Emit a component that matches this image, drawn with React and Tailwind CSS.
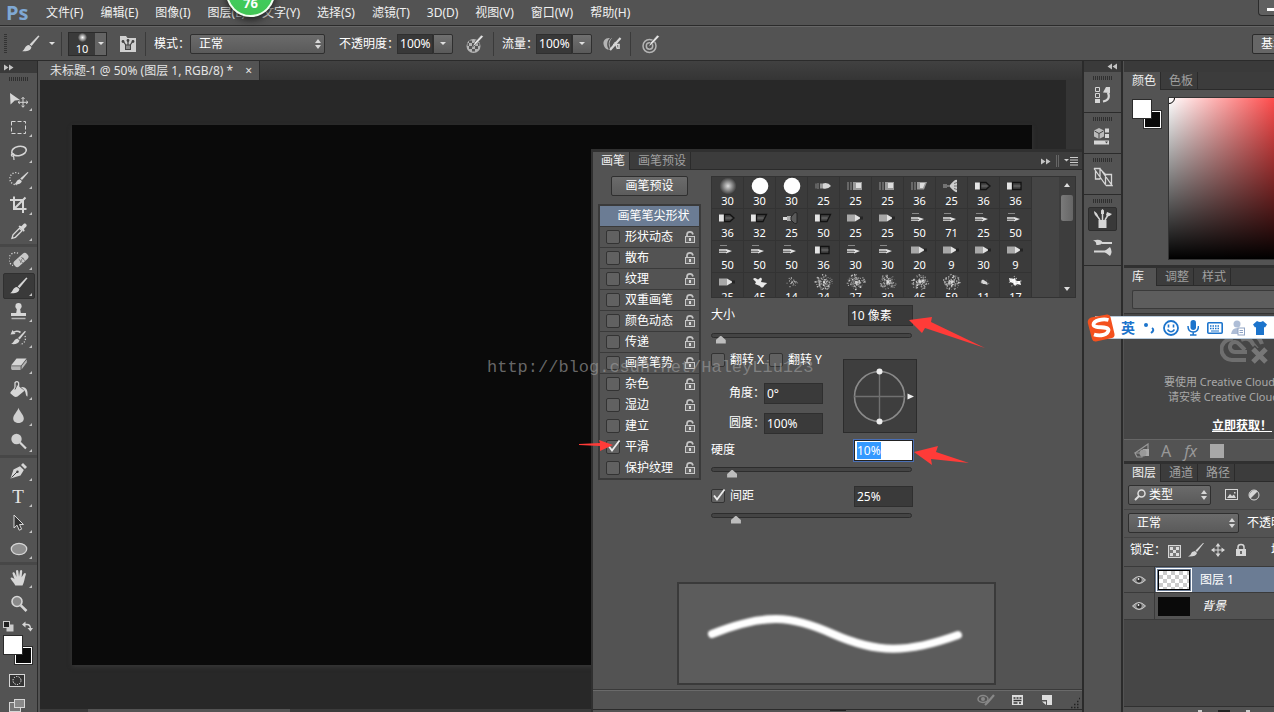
import React, { useEffect, useRef } from "react";

const L = "#d6d6d6";
const M = "#b4b4b4";

function Svg({ w = 20, h = 20, className = "", children }) {
  return (
    <svg width={w} height={h} viewBox={`0 0 ${w} ${h}`} fill="none" aria-hidden="true" className={`block shrink-0 ${className}`}>
      {children}
    </svg>
  );
}

const brushShape = (
  <>
    <path d="M18.5 2.2 10.6 12 8.6 10.4 17.3 1.6Z" fill={L} />
    <path d="M8 11 10.4 13C10 16.5 6 17.8 1.2 17.2 4 16 3.6 11.4 8 11Z" fill={L} />
  </>
);

const tools = {
  move: (
    <>
      <path d="M1 2 11 9 5.8 9.6 1.5 13.5Z" fill={L} />
      <path d="M14 6.5V16M9.2 11.3H18.8M12.5 8 14 6.3 15.5 8M12.5 14.6 14 16.3 15.5 14.6M10.8 9.8 9 11.3 10.8 12.8M17.2 9.8 19 11.3 17.2 12.8" stroke={L} />
    </>
  ),
  marquee: <rect x="2.5" y="4.5" width="14" height="12" stroke={L} strokeDasharray="4 2" />,
  lasso: (
    <>
      <ellipse cx="10" cy="8" rx="7.4" ry="4.6" stroke={L} strokeWidth="1.6" transform="rotate(-12 10 8)" />
      <path d="M3.6 10.5C1.4 11.4 2.4 13.6 4.2 13 6 12.4 5 10.4 3.6 10.5M4.6 13 5 17" stroke={L} strokeWidth="1.2" />
    </>
  ),
  quick: (
    <>
      <path d="M10 4.5A6 6 0 1 0 8 15.5" stroke={L} strokeDasharray="1.2 1.6" strokeWidth="1.3" />
      <path d="M19.5 3.5 13 11 11.2 9.5 18.6 3Z" fill={L} />
      <path d="M10.6 10.2 12.8 12C12 15.5 8.6 15.6 5 15.4 7.6 14.4 7 11 10.6 10.2Z" fill={L} />
    </>
  ),
  crop: <path d="M5 1.5V14H17.5M1 5H14V18M16.5 2.5 5.5 13.5" stroke={L} strokeWidth="2" />,
  dropper: (
    <>
      <path d="M3 17.3 4 13.8 10.5 7.2 13 9.7 6.4 16.3Z" stroke={L} strokeWidth="1.3" />
      <path d="m9.5 5.5 5.2 5.2 1-1-.8-1.8 2.4-2.3c1.4-1.6-1-4.1-2.7-2.7l-2.2 2.3-1.8-.8Z" fill={L} />
    </>
  ),
  heal: (
    <>
      <path d="M9 3.2A6 6 0 1 0 4 15.5" stroke={L} strokeDasharray="1.2 1.6" strokeWidth="1.3" />
      <rect x="3.5" y="6.5" width="17" height="7" rx="3" fill="#c9c9c9" transform="rotate(-42 12 10)" />
      <path d="M9.8 9.4 14 13.2M12.4 7 16 10.8" stroke="#777" />
      <path d="M12 10h1.2M13.5 8.4h1M11 12h1" stroke="#555" />
    </>
  ),
  brush: brushShape,
  stamp: (
    <>
      <circle cx="9.5" cy="4.2" r="3.1" fill={L} />
      <path d="M8 6h3l.8 5H17v3H2v-3h5.2Z" fill={L} />
      <path d="M2.5 16.5H16.5" stroke={M} strokeWidth="1.5" />
    </>
  ),
  history: (
    <>
      <path d="M3 5.5C6 2.5 9.5 3 11.5 4.5" stroke={L} strokeWidth="1.6" />
      <path d="M1.5 6.5 3.5 2 6.5 6Z" fill={L} />
      <path d="M17 3.5 10.6 11.5 9 10 15.8 3Z" fill={L} />
      <path d="M8.4 10.5 10.5 12.5C9.5 16 6 16.5 2 16 4.8 15 4.8 11.2 8.4 10.5Z" fill={L} />
      <path d="M16 8c1.5 4-1 8-5 8.5" stroke={L} strokeDasharray="1.2 1.6" strokeWidth="1.3" />
    </>
  ),
  eraser: (
    <>
      <path d="M7.5 4.5H17.5L12 11.5H2Z" fill={L} />
      <path d="M2 12.3H11.6V16H3Q1.8 15.5 2 12.3ZM12.6 12 17.8 5.5V8.5L12.6 15.5Z" fill={M} />
    </>
  ),
  bucket: (
    <>
      <path d="M8 5 15.5 10.8 8.5 16.5Q6.5 17.5 4.5 16L1.5 13.5Q1 12.5 2 11.5Z" fill={L} />
      <path d="M6 8V2.8Q8 .5 9.6 2.8V9" stroke={L} strokeWidth="1.3" />
      <path d="M8 5 6 9.5" stroke="#555" />
      <path d="M12 7C18 6.5 19 11 18.5 16.5 16.5 16.5 17 12 15.5 10.5Z" fill={L} />
    </>
  ),
  blur: <path d="M9.5 1.8C10.5 5.5 14.8 9 14.8 12.5 14.8 18.5 4.2 18.5 4.2 12.5 4.2 9 8.5 5.5 9.5 1.8Z" fill="#cfcfcf" />,
  dodge: (
    <>
      <circle cx="7.5" cy="7" r="5.2" fill="#cfcfcf" />
      <path d="m11 10.5 6 6" stroke={L} strokeWidth="2.2" />
    </>
  ),
  pen: (
    <>
      <path d="M1.5 17.5 4.5 8.5 11 5.2 14.8 9 11.5 14.5Z" fill={L} />
      <path d="M12 4 14 2 18 6 16 8Z" fill={L} />
      <path d="M2.5 16.5 8 11" stroke="#444" />
      <circle cx="8.5" cy="10.7" r="1.2" fill="#444" />
    </>
  ),
  path: <path d="M5 2V15L8 12.2 10.2 17.2 12.6 16.2 10.5 11.5H14.5Z" fill="#333" stroke={L} />,
  ellipse: <ellipse cx="10" cy="10" rx="7.7" ry="5.7" fill="#8f8f8f" stroke={L} strokeWidth="1.3" />,
  hand: (
    <path
      d="M6.3 17.5C5 14.5 2.5 12.5 1.5 10.2 2 8.5 4.5 10 5.5 11.2L3.5 5.5C3.5 4 5.3 4 5.8 5.3L7.5 9 7 3C7.2 1.5 9 1.5 9.3 3L10 8.8 11 3C11.5 1.5 13.3 2 13.2 3.5L12.6 9.3 15 5.5C16 4.3 17.3 5.3 16.8 6.5 15.5 10 15.5 14 13.5 17.5Z"
      fill={L}
    />
  ),
  zoom: (
    <>
      <circle cx="8" cy="7.5" r="5" fill="#8a8a8a" stroke={L} strokeWidth="1.6" />
      <path d="m11.8 11.3 5.7 5.7" stroke={L} strokeWidth="2.6" />
    </>
  ),
};

const toolGroups = [
  [["move", "移动工具"], ["marquee", "矩形选框工具"], ["lasso", "套索工具"], ["quick", "快速选择工具"], ["crop", "裁剪工具"], ["dropper", "吸管工具"]],
  [["heal", "污点修复画笔工具"], ["brush", "画笔工具"], ["stamp", "仿制图章工具"], ["history", "历史记录画笔工具"], ["eraser", "橡皮擦工具"], ["bucket", "油漆桶工具"], ["blur", "模糊工具"], ["dodge", "减淡工具"]],
  [["pen", "钢笔工具"], ["type", "横排文字工具"], ["path", "路径选择工具"], ["ellipse", "椭圆工具"]],
  [["hand", "抓手工具"], ["zoom", "缩放工具"]],
];

function Grip({ className = "" }) {
  return <div className={`h-1 w-5 bg-[repeating-linear-gradient(90deg,#2f2f2f_0_1px,#535353_1px_2px)] ${className}`} />;
}

function Chevrons({ left = false }) {
  return (
    <Svg w={10} h={7} className={left ? "rotate-180" : ""}>
      <path d="M0 .5 4.500 3.500 0 6.500ZM5 .5 9.500 3.500 5 6.500Z" fill="#c4c4c4" />
    </Svg>
  );
}

function Updown() {
  return (
    <Svg w={6} h={10}>
      <path d="M0 4 3 0 6 4ZM0 6 3 10 6 6Z" fill="#d8d8d8" />
    </Svg>
  );
}

function Select({ label, value, className = "", icon = null, pad = "pl-2" }) {
  return (
    <div className={`relative h-5 shrink-0 ${className}`}>
      <select
        aria-label={label}
        defaultValue={value}
        className={`h-5 w-full appearance-none rounded-xs border border-[#2f2f2f] bg-linear-to-b from-[#6b6b6b] to-[#5a5a5a] text-xs leading-4 text-white ${pad}`}
      >
        <option>{value}</option>
      </select>
      {icon && <span className="pointer-events-none absolute top-1 left-1.5">{icon}</span>}
      <span className="pointer-events-none absolute top-[5px] right-1">
        <Updown />
      </span>
    </div>
  );
}

function Combo({ id, label, value }) {
  return (
    <div className="flex shrink-0 items-center">
      <label htmlFor={id} className="-mr-0.5 text-white">{label}</label>
      <input id={id} defaultValue={value} className="h-5 w-9 border border-[#2f2f2f] bg-[#383838] pl-0.5 text-xs text-white" />
      <button aria-label={`${label}滑块`} className="flex h-5 w-5 items-center justify-center rounded-r-xs border border-[#2f2f2f] bg-linear-to-b from-[#707070] to-[#5a5a5a]">
        <Caret />
      </button>
    </div>
  );
}

function Caret() {
  return (
    <Svg w={6} h={3}>
      <path d="M0 0H6L3 3Z" fill="#e0e0e0" />
    </Svg>
  );
}

function Divider() {
  return <div className="h-6 w-px shrink-0 bg-[#3a3a3a]" />;
}

const menus = ["文件(F)", "编辑(E)", "图像(I)", "图层(L)", "文字(Y)", "选择(S)", "滤镜(T)", "3D(D)", "视图(V)", "窗口(W)", "帮助(H)"];

function MenuBar() {
  return (
    <header className="relative flex h-[26px] shrink-0 items-center border-b border-[#2b2b2b] bg-[#535353] pl-1.5">
      <span className="w-10 shrink-0 font-['Open_Sans',sans-serif] text-xl leading-6 font-bold text-[#7fa8d4]">Ps</span>
      <nav className="flex flex-1 gap-[17px] whitespace-nowrap">
        {menus.map((m) => (
          <button key={m} className="leading-4 text-[#f0f0f0]">{m}</button>
        ))}
      </nav>
      <button aria-label="最小化" className="flex h-4 w-4 items-end self-start rounded-bl border-b border-l border-[#2b2b2b] bg-[#606060] pb-1 pl-2">
        <span className="h-[3px] w-2 bg-white" />
      </button>
      <div className="absolute -top-8 left-[226px] z-20 flex h-[49px] w-[49px] items-end justify-center rounded-full border-2 border-[#f1fff1] bg-linear-to-b from-[#3ed76a] to-[#42c554] pb-1 text-[13px] leading-4 font-bold text-white shadow-[0_3px_7px_#222]">
        76
      </div>
    </header>
  );
}

function PressureIcon({ kind }) {
  return (
    <Svg w={20} h={20}>
      {kind === "opacity" && (
        <>
          <circle cx="8.500" cy="12" r="7" fill={M} />
          <path d="M4 6.500h3v2.500H4zM10 6.500h3v2.500h-3zM7 9h3v3H7zM2.500 9H4v3H2.500zM13 9h1.500v3H13zM4 12h3v3H4zM10 12h3v3h-3zM7 15h3v2.500H7z" fill="#565656" />
        </>
      )}
      {kind === "size" && (
        <>
          <circle cx="8.500" cy="12" r="6.500" stroke={M} strokeWidth="1.500" />
          <circle cx="8.500" cy="12" r="3.200" stroke={M} strokeWidth="1.500" />
        </>
      )}
      {kind === "air" ? (
        <>
          <path d="M8 4C3 3.500 1 7 1.500 10S4 16 7 15.500C4 12 5 6.500 8 4Z" fill={M} />
          <path d="M9.500 4.500C6.500 7 6.500 12 9 15" stroke={M} />
          <path d="M8 16 18.500 4" stroke={L} strokeWidth="2.200" />
          <path d="M11 10.500H17V15M13 8 15.500 15" stroke={L} strokeWidth="1.600" />
        </>
      ) : (
        <path d="M18.500 2.500 11.500 10 7.500 13 9.500 8.500 16.300 1Z" fill="#e2e2e2" stroke="#454545" strokeWidth=".6" />
      )}
    </Svg>
  );
}

function OptionsBar() {
  return (
    <div className="flex h-[35px] shrink-0 items-center overflow-hidden border-t border-b border-t-[#666] border-b-[#2b2b2b] bg-[#535353] pl-1 whitespace-nowrap">
      <div className="h-5 w-[3px] shrink-0 bg-[repeating-linear-gradient(#333_0_1px,#535353_1px_2px)]" />
      <button aria-label="工具预设" className="ml-3.5 flex shrink-0 items-center gap-2">
        <Svg>{brushShape}</Svg>
        <Caret />
      </button>
      <div className="ml-1.5"><Divider /></div>
      <button aria-label="画笔选取器" className="ml-1.5 flex h-6 w-[39px] shrink-0 border border-[#2b2b2b] bg-[#3a3a3a]">
        <span className="flex w-[26px] flex-col items-center">
          <span className="h-[9px] w-[9px] rounded-full bg-[radial-gradient(#fff,#999_40%,#3a3a3a_75%)]" />
          <span className="mt-px text-[11px] leading-3 text-white">10</span>
        </span>
        <span className="flex h-full flex-1 items-center justify-center bg-[#646464]"><Caret /></span>
      </button>
      <button aria-label="切换画笔面板" className="ml-3 shrink-0">
        <Svg w={18} h={18}>
          <path d="M1 1H7L8.500 3H17V17H1Z" fill="#d0d0d0" />
          <path d="M4 6 7.500 11M9 5V11M14 6 10.500 11" stroke="#444" strokeWidth="1.300" />
          <circle cx="4" cy="6.500" r="1.400" fill="#444" />
          <circle cx="9" cy="5.500" r="1.400" fill="#444" />
          <circle cx="14" cy="6.500" r="1.400" fill="#444" />
          <rect x="6.500" y="10" width="5" height="4.500" fill="#888" stroke="#444" />
        </Svg>
      </button>
      <div className="ml-2"><Divider /></div>
      <span className="ml-2 text-white">模式：</span>
      <Select label="模式" value="正常" className="w-[135px]" />
      <div className="ml-3.5"><Combo id="opacity" label="不透明度：" value="100%" /></div>
      <button aria-label="不透明度压力" className="ml-3 shrink-0"><PressureIcon kind="opacity" /></button>
      <div className="ml-2"><Divider /></div>
      <div className="ml-2"><Combo id="flow" label="流量：" value="100%" /></div>
      <button aria-label="喷枪" className="ml-2.5 shrink-0"><PressureIcon kind="air" /></button>
      <div className="ml-2"><Divider /></div>
      <button aria-label="大小压力" className="ml-2.5 shrink-0"><PressureIcon kind="size" /></button>
      <div className="ml-auto w-[22px] shrink-0 overflow-hidden">
        <button className="h-5 rounded-xs border border-[#2b2b2b] bg-[#666] px-2 text-white">基本功能</button>
      </div>
    </div>
  );
}

function Swatches() {
  return (
    <div className="relative h-[30px] w-[30px]">
      <div className="absolute right-0 bottom-0 h-[19px] w-[19px] border border-[#2b2b2b] bg-white p-px">
        <div className="h-full w-full bg-[#0a0a0a]" />
      </div>
      <div className="absolute top-0 left-0 h-5 w-5 border border-[#2b2b2b] bg-white" />
    </div>
  );
}

function Toolbar() {
  return (
    <aside className="flex w-[38px] shrink-0 flex-col overflow-hidden border-r border-[#2b2b2b] bg-[#535353]">
      <div className="flex h-3 shrink-0 items-center bg-[#3a3a3a] pl-1"><Chevrons /></div>
      <Grip className="mt-1 mb-[7px] ml-[9px] shrink-0" />
      {toolGroups.map((group, i) => (
        <div key={i} className={i ? "border-t-[3px] border-t-[#474747]" : ""}>
          {group.map(([name, label]) => (
            <button
              key={name}
              aria-label={label}
              className={`relative ml-[3px] flex h-[26px] w-8 items-center rounded-xs pl-[5px] ${name === "brush" ? "border border-[#303030] bg-[#3a3a3a]" : "border border-transparent"}`}
            >
              {name === "type" ? (
                <span className="w-[18px] text-center font-['Liberation_Serif',serif] text-[19px] leading-5 text-[#e4e4e4]">T</span>
              ) : (
                <Svg>{tools[name]}</Svg>
              )}
              {name !== "zoom" && (
                <Svg w={3} h={3} className="absolute right-0.5 bottom-0.5"><path d="M3 0V3H0Z" fill="#c4c4c4" /></Svg>
              )}
            </button>
          ))}
        </div>
      ))}
      <div className="flex h-[18px] shrink-0 items-center gap-2 pl-[3px]">
        <Svg w={11} h={11}>
          <rect x="3.500" y="3.500" width="7" height="7" fill="#ccc" />
          <rect x=".5" y=".5" width="6" height="6" fill="#222" stroke="#ccc" />
        </Svg>
        <Svg w={11} h={11}>
          <path d="M2 3.500H5Q8.500 3.500 8.500 8" stroke={L} strokeWidth="1.300" />
          <path d="M3.500 .5V6.500L0 3.500ZM5.500 7H11L8.500 10.500Z" fill={L} />
        </Svg>
      </div>
      <div className="mb-2 ml-[3px]"><Swatches /></div>
      <button aria-label="快速蒙版" className="ml-2 shrink-0">
        <Svg w={18} h={16}>
          <rect x="1.500" y="1.500" width="15" height="12" fill="#333" stroke={L} />
          <circle cx="9" cy="7.500" r="4" stroke="#fff" strokeDasharray="1.200 1.300" />
        </Svg>
      </button>
      <button aria-label="屏幕模式" className="mt-2 ml-2 shrink-0">
        <Svg w={18} h={16}>
          <rect x="1.500" y="5.500" width="11" height="9" fill="#777" stroke={L} />
          <rect x="6.500" y="2.500" width="10" height="8" fill="#888" stroke={L} />
        </Svg>
      </button>
    </aside>
  );
}

function Lock() {
  return (
    <Svg w={12} h={14}>
      <path d="M3 7V4.500Q3 1.800 6 1.800 8.500 1.800 9 4.500" stroke="#c4c4c4" strokeWidth="1.700" />
      <rect x="1.500" y="6.500" width="9" height="6" fill="#666" stroke="#c8c8c8" />
      <path d="M6 8v3" stroke="#e6e6e6" strokeWidth="1.800" />
    </Svg>
  );
}

function Check({ id, label, checked = false, className = "" }) {
  return (
    <span className={`flex items-center ${className}`}>
      <span className="relative h-3.5 w-3.5 shrink-0">
        <input id={id} type="checkbox" defaultChecked={checked} className="peer block h-3.5 w-3.5 appearance-none rounded-xs border border-[#333] bg-[#616161]" />
        <svg width="14" height="14" viewBox="0 0 14 14" fill="none" aria-hidden="true" className="pointer-events-none absolute top-0 left-0 hidden overflow-visible peer-checked:block">
          <path d="M3 6.500 6 10.500 13.500 .5" stroke="#ececec" strokeWidth="1.800" />
        </svg>
      </span>
      <label htmlFor={id} className="pl-[5px] whitespace-nowrap text-white">{label}</label>
    </span>
  );
}

function Slider({ label, value }) {
  return (
    <input
      type="range"
      aria-label={label}
      defaultValue={value}
      className="block h-4 w-[201px] appearance-none bg-transparent [&::-webkit-slider-runnable-track]:h-[5px] [&::-webkit-slider-runnable-track]:rounded-full [&::-webkit-slider-runnable-track]:border [&::-webkit-slider-runnable-track]:border-[#2d2d2d] [&::-webkit-slider-runnable-track]:bg-[#444] [&::-webkit-slider-thumb]:mt-0.5 [&::-webkit-slider-thumb]:h-2 [&::-webkit-slider-thumb]:w-2.5 [&::-webkit-slider-thumb]:appearance-none [&::-webkit-slider-thumb]:bg-[#bdbdbd] [&::-webkit-slider-thumb]:[clip-path:polygon(50%_0,100%_55%,100%_100%,0_100%,0_55%)]"
    />
  );
}

function Spatter({ n, r, seed }) {
  const dots = [];
  let s = seed;
  const rnd = () => {
    s = (s * 16807) % 2147483647;
    return s / 2147483647;
  };
  for (let i = 0; i < n; i++) {
    const a = rnd() * 6.283;
    const d = rnd() * r;
    dots.push([12 + Math.cos(a) * d, 9 + Math.sin(a) * d * 0.85, 0.3 + rnd() * 0.5, 0.3 + rnd() * 0.6]);
  }
  return dots.map(([x, y, q, o], i) => <circle key={i} cx={x} cy={y} r={q} fill="#ddd" opacity={o} />);
}

function Tip({ kind, index }) {
  const art = {
    soft: <circle cx="12" cy="9" r="8.500" fill="url(#softTip)" />,
    hard: <circle cx="12" cy="9" r="8.300" fill="#fff" />,
    point: <><path d="M4 6.500v5M6 6v6" stroke="#777" strokeWidth="1.300" /><path d="M8 6.500h3v5H8z" fill="#999" /><path d="M11 6.500Q16 5 19 9 16 12.500 11 11.500Z" fill="#d5d5d5" /></>,
    flat: <><path d="M4 5v8M7 5v8" stroke="#777" strokeWidth="1.500" /><path d="M9 5h9v8H9z" fill="#999" /><path d="M12 6h5v5h-5z" fill="#ddd" /></>,
    angle: <><path d="M4 5v8M7 5v8" stroke="#777" strokeWidth="1.500" /><path d="M9 5h10l-3 7.500H9z" fill="#999" /><path d="M12 6h5l-2 5h-3z" fill="#ddd" /></>,
    fan: <><path d="M4 7v4M6 7v4M7 9h4" stroke="#888" strokeWidth="1.500" /><path d="M10 8Q15 2 17 3V15Q15 16 10 10Z" fill="#ccc" /><path d="M14 6.500 17 5.500M14 9h3M14 11.500l3 1" stroke="#555" strokeWidth=".8" /></>,
    dpoint: <><path d="M3 5.500h5v7H3z" fill="#e5e5e5" /><path d="M8.500 5.500H14L18 9 14 12.500H8.500Z" fill="#454545" stroke="#121212" strokeWidth="1.300" /><path d="M9.500 9h6" stroke="#707070" /></>,
    dflat: <><path d="M3 5.500h5v7H3z" fill="#e5e5e5" /><path d="M8.500 5.500H17v7H8.500Z" fill="#454545" stroke="#121212" strokeWidth="1.300" /><path d="M9.500 9h7" stroke="#707070" /></>,
    dangle: <><path d="M3 5.500h5v7H3z" fill="#e5e5e5" /><path d="M8.500 5.500H18.500l-3.500 7H8.500Z" fill="#454545" stroke="#121212" strokeWidth="1.300" /><path d="M9.500 9h6" stroke="#707070" /></>,
    dfan: <><path d="M3 8h5v3H3z" fill="#ddd" /><path d="M7 7h4v5H7z" fill="#aaa" /><path d="M11 8Q15 2 17 4V14Q15 16 11 11Z" fill="#5a5a5a" stroke="#222" /></>,
    marker: <><path d="M3 5.500h8v7H3z" fill="#a8a8a8" /><path d="M11 5.500 16 8.500v1L11 12.500Z" fill="#e2e2e2" /><path d="M16 7.500h3v3h-3z" fill="#242424" /></>,
    pencil: <><path d="M4 4.500h7" stroke="#888" /><path d="M3 8h7v4H3z" fill="#bbb" /><path d="M10 8 16 10 10 12.500Z" fill="#e2e2e2" /><path d="M3 10.500h8" stroke="#777" /></>,
    smear: <path d="M5 6C8 3 9 8 11 6s2-1 3 0l-1 3 6 1c-1 2-2 1-3 3s-3 2-4 0l-5-2 1-2Z" fill="#e9e9e9" filter="url(#tipBlur)" />,
    sparse: <Spatter n={34} r={6} seed={77} />,
    spray: <Spatter n={150} r={9} seed={index * 97 + 13} />,
    chunk: <><path d="M9 8 11 6.500 13 8 15 9 15.500 12 13 11 11 11Z" fill="#d5d5d5" /><Spatter n={18} r={5} seed={31} /></>,
    blob: <><path d="M5 5 9 6 11 5 12 8 16 8 17 12 13 11 11 13 9 10 6 9Z" fill="#fff" /><Spatter n={40} r={7} seed={57} /></>,
  };
  return <Svg w={24} h={18}>{art[kind]}</Svg>;
}

const tips = [
  ["soft", 30], ["hard", 30], ["hard", 30], ["point", 25], ["flat", 25], ["flat", 25], ["angle", 36], ["fan", 25], ["dpoint", 36], ["dflat", 36],
  ["dpoint", 36], ["dangle", 32], ["dfan", 25], ["dangle", 50], ["marker", 25], ["marker", 25], ["pencil", 50], ["pencil", 71], ["pencil", 25], ["pencil", 50],
  ["pencil", 50], ["pencil", 50], ["pencil", 50], ["dflat", 36], ["pencil", 30], ["pencil", 30], ["marker", 20], ["marker", 9], ["marker", 30], ["marker", 9],
  ["marker", 25], ["smear", 45], ["sparse", 14], ["spray", 24], ["spray", 27], ["spray", 39], ["spray", 46], ["spray", 59], ["chunk", 11], ["blob", 17],
];

const dynamics = [
  ["形状动态"], ["散布"], ["纹理"], ["双重画笔"], ["颜色动态"], ["传递"], ["画笔笔势"], ["杂色"], ["湿边"], ["建立"], ["平滑", true], ["保护纹理"],
];

function Field({ id, value, className }) {
  return <input id={id} defaultValue={value} className={`h-[21px] border border-[#2f2f2f] bg-[#3a3a3a] pl-0.5 text-xs text-white ${className}`} />;
}

function TabStrip({ tabs, children }) {
  return (
    <div role="tablist" className="flex h-[18px] shrink-0 items-stretch overflow-hidden bg-[#3c3c3c] whitespace-nowrap shadow-[inset_0_-1px_#2b2b2b]">
      {tabs.map((t, i) => (
        <button
          key={t}
          role="tab"
          aria-selected={i === 0}
          className={`min-w-[33px] border-r border-[#2b2b2b] pr-1 pl-2 text-left leading-4 ${i === 0 ? "bg-[#535353] text-[#f0f0f0]" : "text-[#a0a0a0] shadow-[inset_0_-1px_#2b2b2b]"}`}
        >
          {t}
        </button>
      ))}
      {children}
    </div>
  );
}

function BrushPanel() {
  const hardness = useRef(null);
  useEffect(() => {
    hardness.current.focus();
    hardness.current.select();
  }, []);
  return (
    <section className="absolute top-[88px] right-0 bottom-0 z-10 flex w-[491px] flex-col border-t-[3px] border-l-2 border-[#303030] bg-[#535353]">
      <TabStrip tabs={["画笔", "画笔预设"]}>
        <div className="ml-auto flex items-center gap-[5px] pr-1">
          <Chevrons />
          <span className="h-3 w-[3px] border-r border-l border-[#666]" />
          <Svg w={14} h={10}>
            <path d="M0 3H5L2.500 5.500Z" fill="#ccc" />
            <path d="M6 1.500h8M6 4h8M6 6.500h8M6 9h8" stroke="#ccc" />
          </Svg>
        </div>
      </TabStrip>

      <div className="flex min-h-0 flex-1 pt-1.5 pl-[5px]">
        <div className="w-[113px] shrink-0">
          <button className="ml-[13px] block h-5 w-[77px] rounded-xs border border-[#2f2f2f] bg-linear-to-b from-[#6b6b6b] to-[#5c5c5c] leading-4 text-white">画笔预设</button>
          <div className="mt-2 w-[103px] border-2 border-[#3a3a3a]">
            <button className="block h-5 w-full bg-[#6b7c94] pl-2 leading-4 text-white">画笔笔尖形状</button>
            {dynamics.map(([name, on], i) => (
              <div key={name} className={`flex h-[21px] items-center justify-between border-t pr-[3px] pl-1.5 ${i < 8 ? "border-[#3a3a3a]" : "border-transparent"}`}>
                <Check id={`dyn-${i}`} label={name} checked={on} />
                <button aria-label={`锁定${name}`}><Lock /></button>
              </div>
            ))}
          </div>
        </div>

        <div className="min-w-0 flex-1">
          <div className="flex h-[122px] w-[365px] overflow-hidden border border-[#333] bg-[#454545]">
            <div className="grid h-32 w-80 shrink-0 grid-cols-10">
              {tips.map(([kind, n], i) => (
                <button key={i} className="flex h-8 flex-col items-center border-r border-b border-[#333] bg-[#3b3b3b]">
                  <Tip kind={kind} index={i} />
                  <span className="text-[11px] leading-3 text-white">{n}</span>
                </button>
              ))}
            </div>
            <div className="ml-auto flex w-4 flex-col items-center justify-between bg-[#3d3d3d] py-1.5">
              <Svg w={6} h={4}><path d="M0 4 3 0 6 4Z" fill="#ddd" /></Svg>
              <div className="mt-2 mb-auto h-[26px] w-3 rounded-xs bg-linear-to-r from-[#7a7a7a] to-[#666]" />
              <Svg w={6} h={4}><path d="M0 0H6L3 4Z" fill="#ddd" /></Svg>
            </div>
          </div>

          <div className="w-[207px] pt-1.5">
            <div className="flex h-[22px] items-center justify-between pr-[5px] text-white">
              <label htmlFor="size">大小</label>
              <Field id="size" value="10 像素" className="w-[65px]" />
            </div>
            <div className="pt-px"><Slider label="大小" value={2} /></div>
            <div className="flex">
              <div className="pt-[3px]">
                <div className="flex h-7 items-center">
                  <Check id="flipx" label="翻转 X" className="w-[58px]" />
                  <Check id="flipy" label="翻转 Y" />
                </div>
                <div className="mt-1 flex h-[30px] items-center pl-[18px] text-white">
                  <label htmlFor="angle" className="w-[35px] whitespace-nowrap">角度：</label>
                  <Field id="angle" value="0°" className="w-[59px]" />
                </div>
                <div className="flex h-[30px] items-center pl-[18px] text-white">
                  <label htmlFor="round" className="w-[35px] whitespace-nowrap">圆度：</label>
                  <Field id="round" value="100%" className="w-[59px]" />
                </div>
              </div>
              <svg width="74" height="74" viewBox="0 0 74 74" fill="none" className="mt-4 ml-5 block shrink-0" role="img" aria-label="画笔角度">
                <rect x=".5" y=".5" width="73" height="73" fill="#3e3e3e" stroke="#2c2c2c" />
                <circle cx="36.500" cy="37.500" r="25" stroke="#8a8a8a" strokeWidth="1.600" />
                <path d="M11 37.500H62M36.500 12V62" stroke="#707070" strokeWidth="1.400" />
                <circle cx="36.500" cy="12.500" r="3" fill="#eee" />
                <circle cx="36.500" cy="62.500" r="3" fill="#eee" />
                <path d="M64.500 34.500 71 37.500 64.500 40.500Z" fill="#eee" />
              </svg>
            </div>
            <div className="mt-px flex h-[22px] items-center justify-between pr-[5px] text-white">
              <label htmlFor="hardness">硬度</label>
              <input
                id="hardness"
                ref={hardness}
                defaultValue="10%"
                className="h-[21px] w-[59px] border border-[#222] bg-white pl-0.5 text-xs text-black outline outline-[#4a6fb5] selection:bg-[#3399fffe] selection:text-white"
              />
            </div>
            <Slider label="硬度" value={8} />
            <div className="mt-2 flex h-[22px] items-center justify-between pr-[5px] text-white">
              <Check id="spacing" label="间距" checked />
              <Field id="spacingValue" value="25%" className="w-[59px]" />
            </div>
            <Slider label="间距" value={10} />
          </div>
        </div>
      </div>

      <svg width="319" height="103" viewBox="0 0 319 103" fill="none" className="mb-1 ml-[84px] block shrink-0" role="img" aria-label="画笔描边预览">
        <defs>
          <filter id="strokeBlur" x="-10%" y="-50%" width="120%" height="200%"><feGaussianBlur stdDeviation="1.200" /></filter>
          <filter id="tipBlur"><feGaussianBlur stdDeviation=".7" /></filter>
          <radialGradient id="softTip"><stop stopColor="#ddd" /><stop offset="1" stopColor="#3b3b3b" /></radialGradient>
        </defs>
        <rect x="1" y="1" width="317" height="101" fill="#5c5c5c" stroke="#3a3a3a" strokeWidth="2" />
        <path d="M35 52C88 31 114 33 156 52 200 71.500 230 71.500 281 53" stroke="#fff" strokeWidth="8" strokeLinecap="round" filter="url(#strokeBlur)" />
      </svg>
      <footer className="flex h-5 shrink-0 items-center justify-end gap-[17px] border-t border-[#3a3a3a] shadow-[inset_0_1px_#6a6a6a]">
        <Svg w={18} h={14}>
          <ellipse cx="6" cy="6" rx="5" ry="3.500" stroke="#888" strokeWidth="1.500" />
          <circle cx="6" cy="6" r="2" fill="#888" />
          <path d="M17 2 11 9 8 12" stroke="#888" strokeWidth="2.200" />
        </Svg>
        <Svg w={12} h={12}>
          <rect x="0" y="1" width="11" height="10" fill="#ddd" />
          <path d="M1.500 4h2M4.500 4h2M7.500 4h2M1.500 6.500h8M1.500 9h4M7 9h2" stroke="#333" strokeWidth="1.400" />
        </Svg>
        <Svg w={12} h={12}>
          <path d="M1 1h10v10H6V6H1Z" fill="#ddd" />
          <path d="M1 7.500h4V11Z" fill="#ddd" />
        </Svg>
        <Svg w={12} h={14} className="self-end">
          <path d="M1 12.500h9M4 9.500h6M7 6.500h3M9 3.500h1" stroke="#222" strokeDasharray="1.500 1.500" strokeWidth="1.500" />
        </Svg>
      </footer>
      <div className="flex h-[3px] shrink-0 justify-center border-t border-[#2b2b2b]"><span className="h-px w-4 bg-[#222]" /></div>

      <svg width="410" height="170" viewBox="579 300 410 170" className="pointer-events-none absolute top-[148px] -left-3.5" aria-hidden="true">
        <path d="M909 320 932 317 931 322 985 348 925 328 922 333Z" fill="#ff3b38" />
        <path d="M914 452 938 446 936 452 969 463 931 459 932 465Z" fill="#ff3b38" />
        <path d="M579 444 600 443 599 440 613 445 600 451 600 446 579 445Z" fill="#ff3b38" />
      </svg>
    </section>
  );
}

function Workspace() {
  return (
    <main className="relative ml-0.5 flex min-w-0 flex-1 flex-col bg-[#282828]">
      <div className="flex h-[19px] shrink-0 bg-linear-to-b from-[#414141] to-[#353535]">
        <div className="flex items-center gap-3 border-r border-[#2b2b2b] bg-[#535353] pr-[7px] pl-2.5 whitespace-nowrap text-[#e4e4e4]">
          <span>未标题-1 @ 50% (图层 1, RGB/8) *</span>
          <button aria-label="关闭" className="leading-4">×</button>
        </div>
      </div>
      <div className="flex min-h-0 flex-1">
        <div className="flex-1 pt-[45px] pr-[34px] pb-[44px] pl-8">
          <div className="h-full bg-[#0a0a0a] shadow-[0_2px_4px_#363636]" />
        </div>
        <div className="w-4 bg-[#353535]" />
      </div>
      <div className="h-[3px] shrink-0 bg-[#3a3a3a] pl-12"><div className="h-full w-[202px] bg-[#535353]" /></div>
      <BrushPanel />
      <div className="pointer-events-none absolute top-[295px] left-[447px] z-20 font-['Liberation_Mono',monospace] text-[17px] leading-6 whitespace-nowrap text-[#999999a8]">
        http://blog.csdn.net/HaleyLiu123
      </div>
    </main>
  );
}

const dockArt = {
  history: (
    <>
      <path d="M2.500 2.500h4v4h-4zM2.500 8.500h4v4h-4z" stroke={L} />
      <path d="M2 14h5v4H2z" fill={L} />
      <path d="M10 16.500Q18 15 15 7.500" stroke={L} strokeWidth="2.200" />
      <path d="M10 7.500 13 2H17V8Z" fill={L} />
    </>
  ),
  properties: (
    <>
      <path d="M6 2 11 4.500V10.500L6 13 1 10.500V4.500Z" fill="#bbb" />
      <path d="M1.500 5 6 7.500 10.500 5M6 7.500V13" stroke="#444" />
      <path d="M12 2.500h4v4h-4zM12 8h4v4h-4zM1 14.500h15v4H1z" fill={L} />
      <path d="M12 15.500h3l-1.500 2Z" fill="#444" />
    </>
  ),
  clone: <path d="M1 1.500H7V12.500M1 1.500 13 18.500M7 1.500 19 18.500H13M2.500 4V12H7M12.500 7.500H18.500V18M12.500 7.500V17M8 3 13 8" stroke={L} strokeWidth="1.300" />,
  brushes: (
    <>
      <path d="M5.500 11h8v8h-8z" fill={L} />
      <path d="M7 11 3.500 6M9.500 11V4M12 11 15 6" stroke={L} strokeWidth="1.500" />
      <path d="M1 2Q5 4 5 8 1 7 1 2ZM8 5V1.500L9.500 0 11 1.500V5ZM13 6 14 3 19 5Q17 7 14.500 7.500Z" fill={L} />
    </>
  ),
  presets: (
    <>
      <path d="M9 5h10M1 13.500h12" stroke={L} strokeWidth="2" />
      <path d="M0 2.500Q8 0 10 5 6 8 3 6.500 4 4 0 2.500ZM11 13.500 17 9Q20 13.500 17 18Z" fill={L} />
    </>
  ),
};

function IconDock() {
  const groups = [[["history", "历史记录"]], [["properties", "属性"]], [["clone", "仿制源"]], [["brushes", "画笔"], ["presets", "画笔预设"]]];
  return (
    <aside className="flex w-[41px] shrink-0 flex-col border-r-2 border-l-2 border-[#2b2b2b] bg-[#535353]">
      <div className="flex h-[11px] items-center justify-end bg-[#3a3a3a] pr-1"><Chevrons left /></div>
      {groups.map((g, i) => (
        <div key={i} className="flex flex-col items-center border-b border-[#2b2b2b] pb-[5px]">
          <Grip className="mt-1 mb-0.5" />
          {g.map(([name, label]) => (
            <button key={name} aria-label={label} className={`flex w-[29px] items-center justify-center rounded-xs ${name === "brushes" ? "mt-0.5 mb-1 h-6 border border-[#2d2d2d] bg-[#393939]" : "h-[25px]"}`}>
              <Svg>{dockArt[name]}</Svg>
            </button>
          ))}
        </div>
      ))}
    </aside>
  );
}

function Eye() {
  return (
    <Svg w={14} h={10}>
      <path d="M.5 5Q7-2 13.500 5 7 12 .5 5Z" fill="#999" stroke="#ccc" />
      <circle cx="7" cy="4.800" r="2.600" fill="#333" />
      <circle cx="6.500" cy="4" r=".9" fill="#eee" />
    </Svg>
  );
}

function RightPanels() {
  return (
    <aside className="flex w-[151px] shrink-0 flex-col overflow-hidden bg-[#535353] pl-px whitespace-nowrap">
      <div className="h-[11px] shrink-0 bg-[#3a3a3a]" />
      <TabStrip tabs={["颜色", "色板"]} />
      <div className="flex h-[178px] shrink-0 border-b-[3px] border-[#303030] pt-[7px] pl-2">
        <div className="pt-0.5"><Swatches /></div>
        <div className="relative ml-1.5 h-[163px] flex-1 overflow-hidden border border-r-0 border-[#333] bg-[linear-gradient(to_bottom,transparent,#000),linear-gradient(to_right,#fff,#f22_130px)]">
          <div className="absolute -top-1.5 -left-1.5 h-3 w-3 rounded-full border border-black" />
        </div>
      </div>

      <TabStrip tabs={["库", "调整", "样式"]} />
      <div className="h-7 shrink-0 border-b border-[#333] pt-1 pl-2">
        <input aria-label="搜索库" className="h-[19px] w-full rounded-l-xs border border-r-0 border-[#3a3a3a] bg-[#5d5d5d]" />
      </div>
      <div className="flex h-[125px] shrink-0 flex-col bg-[#464646] pt-4">
        <Svg w={50} h={34} className="ml-24">
          <path d="M26 30H13A10 10 0 0 1 11 9Q17-2 29 4 40 6 42 14M27 22H15A5 5 0 1 1 19 14L25 20M21 10Q29 6 33 14L37 19" stroke="#6f6f6f" strokeWidth="4" />
          <path d="M32 18 46 32M46 18 32 32" stroke="#464646" strokeWidth="8" />
          <path d="M33 19 46 32M46 19 33 32" stroke="#777" strokeWidth="5" />
        </Svg>
        <p className="mt-2.5 pl-10 text-[11px] leading-[15px] text-[#a8a8a8]">要使用 Creative Cloud 库</p>
        <p className="pl-11 text-[11px] leading-[15px] text-[#a8a8a8]">请安装 Creative Cloud</p>
        <a href="#get" className="mt-3.5 ml-[88px] font-bold text-white underline">立即获取！</a>
      </div>
      <div className="flex h-[25px] shrink-0 items-center gap-[9px] border-t border-b-[3px] border-t-[#666] border-b-[#303030] pl-2.5 text-[#999]">
        <Svg w={18} h={16}>
          <path d="M1 10 14 1V7" stroke="#999" strokeWidth="1.200" />
          <path d="M1 10H8V14H3Z" stroke="#999" strokeWidth="1.200" />
          <rect x="9" y="6" width="6" height="7" fill="#aaa" />
          <circle cx="9" cy="10" r="3.500" fill="#999" />
        </Svg>
        <span className="text-base leading-4">A</span>
        <span className="ml-1 text-base leading-4 italic">fx</span>
        <span className="ml-1 h-3.5 w-3.5 bg-[#a8a8a8]" />
      </div>

      <TabStrip tabs={["图层", "通道", "路径"]} />
      <div className="flex h-7 shrink-0 items-center gap-3.5 border-b border-[#444] pb-0.5 pl-1">
        <Select
          label="图层过滤"
          value="类型"
          className="w-[83px]"
          pad="pl-5"
          icon={<Svg w={12} h={12}><circle cx="7.500" cy="4.500" r="3.500" stroke="#ddd" strokeWidth="1.500" /><path d="M5 7 1 11" stroke="#ddd" strokeWidth="2" /></Svg>}
        />
        <Svg w={13} h={12}>
          <rect x=".5" y=".5" width="12" height="10" stroke={L} />
          <path d="M2 9 5 5 7 7 9 5.500 11 9ZM9 3h1.500v1.500H9z" fill={L} />
        </Svg>
        <Svg w={12} h={12} className="-ml-1">
          <circle cx="6" cy="6" r="5" fill="#555" stroke={L} />
          <path d="M2.500 9.500A5 5 0 0 1 9.500 2.500Z" fill={L} />
        </Svg>
      </div>
      <div className="flex h-7 shrink-0 items-center gap-2 border-b border-[#444] pb-0.5 pl-1 text-white">
        <Select label="混合模式" value="正常" className="w-[111px]" pad="pl-2" />
        <span>不透明度：</span>
      </div>
      <div className="flex h-[29px] shrink-0 items-center border-b border-[#3a3a3a] pb-1 pl-1.5 text-white">
        <span className="shrink-0">锁定：</span>
        <Svg w={13} h={13} className="mt-0.5 ml-0.5">
          <rect x=".5" y=".5" width="12" height="12" fill="#777" stroke={L} />
          <path d="M2 2h3v3H2zM8 2h3v3H8zM5 5h3v3H5zM2 8h3v3H2zM8 8h3v3H8z" fill="#ddd" />
        </Svg>
        <Svg w={17} h={16} className="ml-[7px]"><path d="M16 1 9 10 7.500 8.500 15 1ZM7 9 9 11Q8 15 0 14.500 3 13 4 10Z" fill={L} /></Svg>
        <Svg w={14} h={14} className="ml-1.5"><path d="M7 1v12M1 7h12" stroke={L} /><path d="M7 0 9.500 3.500H4.500ZM7 14 4.500 10.500H9.500ZM0 7 3.500 4.500V9.500ZM14 7 10.500 9.500V4.500Z" fill={L} /></Svg>
        <Svg w={12} h={14} className="ml-2.5"><path d="M3 7V4Q3 1.500 6 1.500T9 4V7" stroke={L} strokeWidth="1.500" /><path d="M1 6h10v7H1z" fill={L} /><path d="M6 8v3" stroke="#444" strokeWidth="1.500" /></Svg>
        <span className="ml-6 shrink-0">填充：</span>
      </div>
      <div className="flex h-[26px] shrink-0 items-center border-b border-[#3a3a3a] bg-[#6b7c94]">
        <button aria-label="图层 1 可见性" className="flex h-full w-[31px] shrink-0 items-center justify-center border-r border-[#3a3a3a] bg-[#535353]"><Eye /></button>
        <div className="ml-px border border-white p-px">
          <div className="h-5 w-8 border border-black bg-white bg-[repeating-conic-gradient(#cacaca_0_25%,#fff_0_50%)] bg-size-[8px_8px]" />
        </div>
        <span className="pl-2 text-white">图层 1</span>
      </div>
      <div className="flex h-[27px] shrink-0 items-center border-b border-[#3a3a3a]">
        <button aria-label="背景可见性" className="flex h-full w-[31px] shrink-0 items-center justify-center border-r border-[#3a3a3a]"><Eye /></button>
        <div className="ml-[3px] h-[19px] w-8 bg-[#0a0a0a]" />
        <span className="pl-3 text-white italic">背景</span>
      </div>
      <div className="min-h-0 flex-1 bg-[#464646]" />
      <div className="flex h-1.5 shrink-0 items-end justify-end gap-4 border-t border-[#303030] pr-6">
        <span className="h-0.5 w-1 bg-[#ccc]" />
        <span className="h-0.5 w-3 bg-[#222]" />
        <span className="h-0.5 w-1 bg-[#ccc]" />
      </div>
    </aside>
  );
}

function InputMethodBar() {
  return (
    <div className="absolute top-[314px] right-0 z-30 flex h-[27px] w-[187px] items-center">
      <div className="absolute inset-y-0.5 right-0 left-2 border-y border-[#b9cbdc] bg-white" />
      <Svg w={28} h={28} className="relative">
        <path d="M4 3.500 20 .5Q23 .2 23.500 3L27.500 20Q28 23 25 24L9 27.500Q6 27.800 5 25L.8 9Q.2 5 4 3.500Z" fill="#f4511e" />
        <path d="M21.500 6C16 4.500 6.500 6.500 6.500 10.500 6.500 15 21 11.500 21.500 16 21 21 13 22.500 7 20.500" stroke="#fff" strokeWidth="3.800" />
      </Svg>
      <div className="relative flex items-center gap-2 pl-1.5 text-[#1c74cc]">
        <span className="text-sm leading-5 font-bold">英</span>
        <Svg w={12} h={14}><circle cx="3" cy="4" r="2" fill="#1c74cc" /><path d="M9 7Q12 9 8 12" stroke="#1c74cc" strokeWidth="2" /></Svg>
        <Svg w={16} h={16}>
          <circle cx="8" cy="8" r="7" stroke="#1c74cc" strokeWidth="1.800" />
          <path d="M5.500 4.500v3M10.500 4.500v3M4.500 9.500Q8 14 11.500 9.500" stroke="#1c74cc" strokeWidth="1.600" />
        </Svg>
        <Svg w={12} h={16}>
          <rect x="3.500" y="0" width="5.500" height="10" rx="2.700" fill="#1c74cc" />
          <path d="M1 6Q1 12 6.200 12T11.500 6M6.200 12v3M3 15h6.500" stroke="#1c74cc" strokeWidth="1.500" />
        </Svg>
        <Svg w={16} h={12}>
          <rect x=".8" y=".8" width="14.400" height="10.400" rx="1" stroke="#1c74cc" strokeWidth="1.600" />
          <path d="M3 4h10M3 6.500h10" stroke="#1c74cc" strokeDasharray="1.500 1" strokeWidth="1.500" /><path d="M4 9h8" stroke="#1c74cc" />
        </Svg>
        <Svg w={14} h={16}>
          <circle cx="6" cy="4" r="3.500" fill="#aebdd6" /><path d="M0 14Q1 8 6 8T11 14Z" fill="#aebdd6" />
          <rect x="7" y="8" width="6.500" height="7" fill="#fff" stroke="#8fa3c4" /><path d="M8.500 10.500h3.500M8.500 12.500h3.500" stroke="#8fa3c4" />
        </Svg>
        <Svg w={14} h={14}><path d="M4 0Q7 2 10 0L14 3.500 12 6.500 11 6V14H3V6L2 6.500 0 3.500Z" fill="#1c74cc" /></Svg>
      </div>
    </div>
  );
}

export default function App() {
  return (
    <div className="relative flex h-screen flex-col overflow-hidden bg-[#535353] font-['Noto_Sans','Noto_Sans_CJK_SC',sans-serif] text-xs leading-4 select-none [&_input]:select-text">
      <MenuBar />
      <OptionsBar />
      <div className="flex min-h-0 flex-1">
        <Toolbar />
        <Workspace />
        <IconDock />
        <RightPanels />
      </div>
      <InputMethodBar />
    </div>
  );
}
